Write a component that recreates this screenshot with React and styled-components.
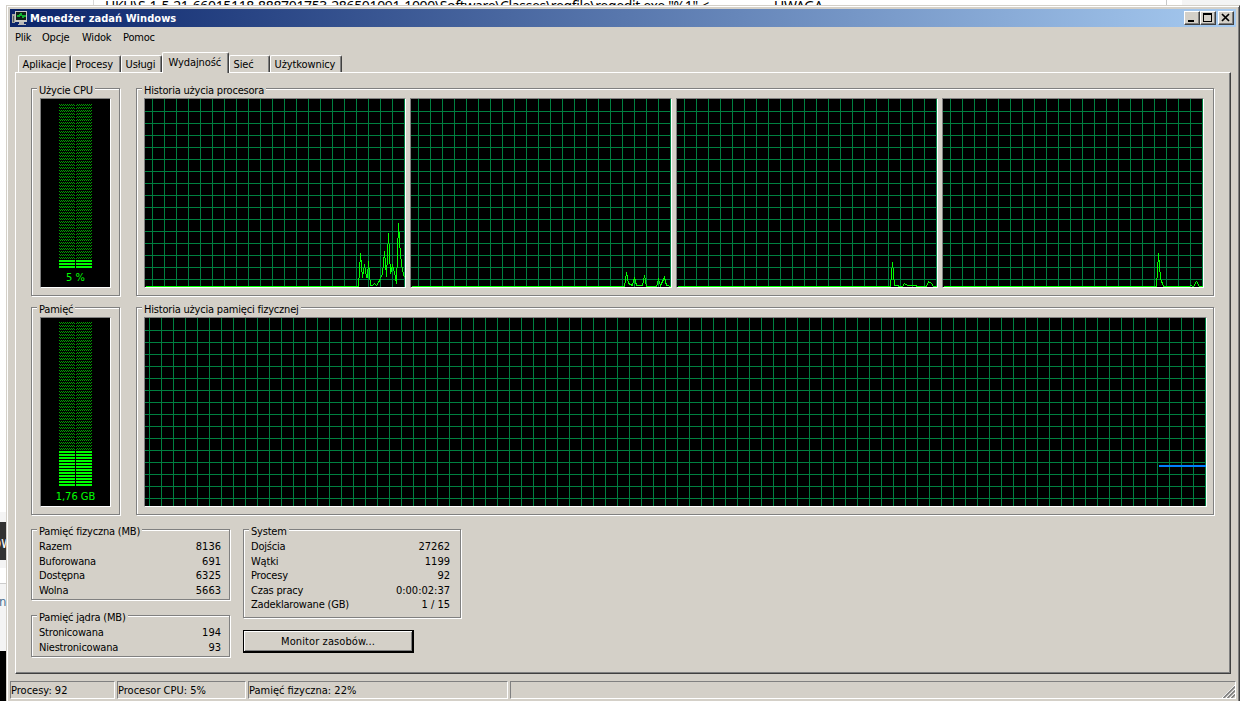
import React from "react";
import styled, { createGlobalStyle, css } from "styled-components";

const cpuTraces = [
    "0,187 213,187 215,154 217,178 219,165 221,178 222,178 223,162 225,186 227,186 229,184 231,186 233,183 235,179 237,174 239,152 241,177 243,134 245,174 247,166 249,173 251,184 253,124 255,156 257,171 259,178",
    "0,187 213,187 215,173 217,184 221,186 223,178 225,186 231,186 233,176 235,187 245,187 247,180 249,186 253,178 255,186 260,187",
    "0,187 213,187 215,163 217,186 225,187 227,184 230,186 238,186 240,187 249,187 251,182 254,184 256,187 260,187",
    "0,187 213,187 215,154 217,179 220,187 246,187 247,186 250,187 253,182 256,187 260,187",
];

const tabs = [
    { label: "Aplikacje", width: 53 },
    { label: "Procesy", width: 50 },
    { label: "Usługi", width: 41 },
    { label: "Wydajność", width: 67, active: true },
    { label: "Sieć", width: 41 },
    { label: "Użytkownicy", width: 72 },
];

const physical = [
    ["Razem", "8136"],
    ["Buforowana", "691"],
    ["Dostępna", "6325"],
    ["Wolna", "5663"],
];

const kernel = [
    ["Stronicowana", "194"],
    ["Niestronicowana", "93"],
];

const system = [
    ["Dojścia", "27262"],
    ["Wątki", "1199"],
    ["Procesy", "92"],
    ["Czas pracy", "0:00:02:37"],
    ["Zadeklarowane (GB)", "1 / 15"],
];

const range = (start, end, step) => {
    const out = [];
    for (let i = start; i < end; i += step) out.push(i);
    return out;
};

const Plot = ({ width, offsetX, children }) => (
    <Screen $width={width}>
        <svg width={width - 2} height="188" shapeRendering="crispEdges">
            {range(offsetX, width - 2, 12).map((x) => (
                <rect key={"v" + x} x={x} y="0" width="1" height="188" fill="#008040" />
            ))}
            {range(12, 188, 12).map((y) => (
                <rect key={"h" + y} x="0" y={y} width={width - 2} height="1" fill="#008040" />
            ))}
            {children}
        </svg>
    </Screen>
);

const Meter = ({ id, top, lit, label }) => (
    <Screen $width={71}>
        <svg width="69" height="188" shapeRendering="crispEdges">
            <defs>
                <pattern id={id} width="2" height="3" y={top} patternUnits="userSpaceOnUse">
                    <rect x="0" y="0" width="1" height="1" fill="#00a000" />
                    <rect x="1" y="1" width="1" height="1" fill="#00a000" />
                </pattern>
            </defs>
            {[18, 35].map((x) => (
                <g key={x}>
                    <rect x={x} y={top} width="16" height={(55 - lit) * 3} fill={`url(#${id})`} />
                    {range(55 - lit, 55, 1).map((n) => (
                        <rect key={n} x={x} y={top + n * 3} width="16" height="2" fill="#00ff00" />
                    ))}
                </g>
            ))}
        </svg>
        <MeterLabel>{label}</MeterLabel>
    </Screen>
);

const Stats = ({ title, rows, width, height, pad }) => (
    <Group $width={width} $height={height}>
        <Caption>{title}</Caption>
        <StatList $pad={pad}>
            {rows.map(([name, value]) => (
                <StatRow key={name}>
                    <span>{name}</span>
                    <StatValue>{value}</StatValue>
                </StatRow>
            ))}
        </StatList>
    </Group>
);

const App = () => (
    <Desktop>
        <GlobalStyle />
        <PageTop>
            <PageText>
                HKU\S-1-5-21-66015118-888701753-286501091-1000\Software\Classes\regfile\regedit.exe "%1" &lt;
            </PageText>
            <PageNote>UWAGA</PageNote>
            <PageSide />
        </PageTop>
        <Body>
            <PageLeft>
                <LeftBlank />
                <LeftDark>ow</LeftDark>
                <LeftGap />
                <LeftLink>n</LeftLink>
                <LeftBlack />
            </PageLeft>
            <Window>
                <TitleBar>
                    <svg width="16" height="16" viewBox="0 0 16 16" shapeRendering="crispEdges">
                        <path d="M0 4h3v9H0z" fill="#a8a8a0" />
                        <path d="M1 6h1v6H1z" fill="#505860" />
                        <path d="M3 1h12v11H3z" fill="#c8c8c4" />
                        <path d="M4 2h10v8H4z" fill="#102018" />
                        <path d="M7 12h5v2H7zM6 14h8v1H6z" fill="#b8b8b8" />
                        <path d="M5 6h2l2-2 2 3 1-1h2" fill="none" stroke="#10b030" strokeWidth="1.5" />
                    </svg>
                    <Title>Menedżer zadań Windows</Title>
                    <Control>
                        <svg width="12" height="10" shapeRendering="crispEdges"><path d="M3 8h6v2H3z" /></svg>
                    </Control>
                    <Control>
                        <svg width="12" height="10" shapeRendering="crispEdges">
                            <path d="M2 1h9v9H2zM3 3v6h7V3z" fillRule="evenodd" />
                        </svg>
                    </Control>
                    <Control $gap>
                        <svg width="12" height="10"><path d="M3 2l7 7M10 2l-7 7" stroke="#000" strokeWidth="1.7" /></svg>
                    </Control>
                </TitleBar>
                <Menu>
                    <MenuItem $width={27}>Plik</MenuItem>
                    <MenuItem $width={40}>Opcje</MenuItem>
                    <MenuItem $width={41}>Widok</MenuItem>
                    <MenuItem $width={40}>Pomoc</MenuItem>
                </Menu>
                <Tabs>
                    {tabs.map((tab) => (
                        <Tab key={tab.label} $width={tab.width} $active={tab.active}>{tab.label}</Tab>
                    ))}
                </Tabs>
                <Panel>
                    <ChartRow>
                        <Group $width={89} $height={208} $screen>
                            <Caption>Użycie CPU</Caption>
                            <Meter id="cpuDots" top={5} lit={3} label="5 %" />
                        </Group>
                        <Group $width={1078} $height={208} $screen>
                            <Caption>Historia użycia procesora</Caption>
                            {cpuTraces.map((points) => (
                                <Plot key={points} width={262} offsetX={7}>
                                    <polyline points={points} transform="translate(0.5 0.5)" fill="none" stroke="#00ff00" />
                                </Plot>
                            ))}
                        </Group>
                    </ChartRow>
                    <ChartRow>
                        <Group $width={89} $height={208} $screen>
                            <Caption>Pamięć</Caption>
                            <Meter id="memDots" top={4} lit={12} label="1,76 GB" />
                        </Group>
                        <Group $width={1078} $height={208} $screen>
                            <Caption>Historia użycia pamięci fizycznej</Caption>
                            <Plot width={1063} offsetX={4}>
                                <rect x="1014" y="147" width="47" height="2" fill="#0080ff" />
                            </Plot>
                        </Group>
                    </ChartRow>
                    <StatsArea>
                        <StatsColumn $gap={14}>
                            <Stats title="Pamięć fizyczna (MB)" rows={physical} width={199} height={71} pad={8} />
                            <Stats title="Pamięć jądra (MB)" rows={kernel} width={199} height={42} pad={8} />
                        </StatsColumn>
                        <StatsColumn $gap={11}>
                            <Stats title="System" rows={system} width={218} height={89} pad={10} />
                            <MonitorButton>Monitor zasobów...</MonitorButton>
                        </StatsColumn>
                    </StatsArea>
                </Panel>
                <StatusBar>
                    <Pane $width={105}>Procesy: 92</Pane>
                    <Pane $width={129}>Procesor CPU: 5%</Pane>
                    <Pane $width={260}>Pamięć fizyczna: 22%</Pane>
                    <Pane $grow>
                        <svg width="13" height="13">
                            <path d="M0 13L13 0M4 13l9-9M8 13l5-5" stroke="#fff" />
                            <path d="M1.5 13L13 1.5M5.5 13L13 5.5M9.5 13L13 9.5" stroke="#808080" strokeWidth="1.6" />
                        </svg>
                    </Pane>
                </StatusBar>
            </Window>
        </Body>
    </Desktop>
);

const GlobalStyle = createGlobalStyle`
    * {
        box-sizing: border-box;
    }
    body {
        margin: 0;
        overflow: hidden;
        background: white;
    }
    svg {
        display: block;
        flex-shrink: 0;
    }
`;

const Desktop = styled.div`
    display: flex;
    flex-direction: column;
    width: 1240px;
    height: 701px;
    overflow: hidden;
    color: black;
    font: 11px/14px "DejaVu Sans Condensed", "DejaVu Sans", sans-serif;
    font-stretch: condensed;
    letter-spacing: -0.2px;
    white-space: nowrap;
`;

const PageTop = styled.div`
    display: flex;
    height: 5px;
    flex-shrink: 0;
    overflow: hidden;
    margin-left: 93px;
    border-left: 1px solid #d8d8d8;
    font: 14px/17px "Noto Sans", sans-serif;
    letter-spacing: -0.35px;
`;

const PageText = styled.span`
    width: 669px;
    padding-left: 11px;
    margin-top: -3px;
`;

const PageNote = styled.span`
    width: 404px;
    padding-left: 11px;
    margin-top: -3px;
    border-right: 1px solid #c8c8c8;
`;

const PageSide = styled.span`
    flex: 1;
    margin-left: 15px;
    background: #f4f4f4;
`;

const Body = styled.div`
    display: flex;
    flex: 1;
`;

const PageLeft = styled.div`
    display: flex;
    flex-direction: column;
    width: 6px;
    overflow: hidden;
`;

const LeftBlank = styled.div`
    height: 517px;
    border-bottom: 10px solid #f4f4f4;
`;

const LeftDark = styled.div`
    height: 38px;
    padding-top: 14px;
    background: #333;
    color: white;
    font-size: 15px;
    text-indent: -7px;
`;

const LeftGap = styled.div`
    height: 24px;
    border-top: 8px solid #f4f4f4;
    border-bottom: 1px solid #ccc;
`;

const LeftLink = styled.div`
    height: 67px;
    padding-top: 11px;
    background: #f4f4f4;
    color: #4a7090;
    font-size: 13px;
    text-indent: -1px;
`;

const LeftBlack = styled.div`
    flex: 1;
    background: black;
`;

const Window = styled.div`
    display: flex;
    flex-direction: column;
    flex: 1;
    padding: 2px;
    background: #d4d0c8;
    border-top: 1px solid #d4d0c8;
    border-left: 1px solid #d4d0c8;
    border-right: 1px solid #404040;
    box-shadow: inset 1px 1px 0 white, inset -1px 0 0 #808080;
`;

const TitleBar = styled.div`
    display: flex;
    align-items: center;
    height: 18px;
    margin: 1px 1px 0;
    padding: 0 2px;
    background: linear-gradient(to right, #0a246a, #a6caf0);
`;

const Title = styled.div`
    flex: 1;
    margin-left: 2px;
    padding-top: 1px;
    color: white;
    font-weight: bold;
    letter-spacing: 0.05px;
`;

const Control = styled.div`
    width: 16px;
    height: 14px;
    margin-left: ${(props) => (props.$gap ? "2px" : "0")};
    background: #d4d0c8;
    border: 1px solid;
    border-color: white #404040 #404040 white;
    box-shadow: inset -1px -1px 0 #808080;
`;

const Menu = styled.div`
    display: flex;
    align-items: center;
    height: 20px;
    padding: 2px 0 0 6px;
`;

const MenuItem = styled.div`
    width: ${(props) => props.$width}px;
`;

const Tabs = styled.div`
    display: flex;
    align-items: flex-end;
    height: 26px;
    padding: 0 9px;
    margin-bottom: -1px;
`;

const Tab = styled.div`
    width: ${(props) => props.$width}px;
    height: 18px;
    padding: 2px 0 0 3.5px;
    border: 1px solid white;
    border-bottom: 0;
    border-right-color: #404040;
    border-radius: 2px 2px 0 0;
    box-shadow: inset -1px 0 0 #808080;
    letter-spacing: -0.1px;
    ${(props) => props.$active && css`
        position: relative;
        height: 21px;
        padding: 3px 0 0 5.5px;
        background: #d4d0c8;
    `}
`;

const Panel = styled.div`
    display: flex;
    flex-direction: column;
    gap: 10px;
    width: 1216px;
    height: 602px;
    margin-left: 6px;
    padding: 15px;
    border: 1px solid;
    border-color: white #404040 #404040 white;
    box-shadow: inset -1px -1px 0 #808080;
`;

const ChartRow = styled.div`
    display: flex;
    gap: 15px;
`;

/* etched frame, the light line sits one pixel inside and outside the dark one */
const Group = styled.div`
    position: relative;
    display: flex;
    gap: 4px;
    width: ${(props) => props.$width}px;
    height: ${(props) => props.$height}px;
    margin: 0 1px 1px 0;
    padding: ${(props) => (props.$screen ? "9px 0 0 " + (props.$width < 100 ? 8 : 7) + "px" : "0")};
    border: 1px solid #808080;
    box-shadow: 1px 1px 0 white, inset 1px 1px 0 white;
`;

const Caption = styled.div`
    position: absolute;
    top: -5px;
    left: 5px;
    padding: 0 2px;
    background: #d4d0c8;
`;

const Screen = styled.div`
    position: relative;
    flex-shrink: 0;
    width: ${(props) => props.$width}px;
    height: 190px;
    background: black;
    border: 1px solid;
    border-color: #808080 white white #808080;
`;

const MeterLabel = styled.div`
    position: absolute;
    bottom: 2px;
    width: 100%;
    color: #00ff00;
    text-align: center;
    letter-spacing: 0;
`;

const StatsArea = styled.div`
    display: flex;
    gap: 12px;
    margin-top: 3px;
`;

const StatsColumn = styled.div`
    display: flex;
    flex-direction: column;
    gap: ${(props) => props.$gap}px;
`;

const StatList = styled.div`
    flex: 1;
    padding: 10px ${(props) => props.$pad}px 0 7px;
`;

const StatRow = styled.div`
    display: flex;
    justify-content: space-between;
    line-height: 14.6px;
`;

const StatValue = styled.span`
    letter-spacing: 0;
`;

const MonitorButton = styled.button`
    width: 171px;
    height: 23px;
    padding: 1px 0 0;
    background: #d4d0c8;
    border: 1px solid black;
    border-width: 1px 2px 2px 1px;
    box-shadow: inset 1px 1px 0 white, inset -1px -1px 0 #808080;
    color: black;
    font: inherit;
    letter-spacing: 0.1px;
`;

const StatusBar = styled.div`
    display: flex;
    gap: 2px;
    padding: 7px 1px 0;
`;

const Pane = styled.div`
    display: flex;
    align-items: center;
    width: ${(props) => props.$width}px;
    height: 18px;
    padding-top: 2px;
    border: 1px solid;
    border-color: #808080 white white #808080;
    letter-spacing: 0;
    ${(props) => props.$grow && css`
        flex: 1;
        align-items: flex-end;
        justify-content: flex-end;
    `}
`;

export default App;
